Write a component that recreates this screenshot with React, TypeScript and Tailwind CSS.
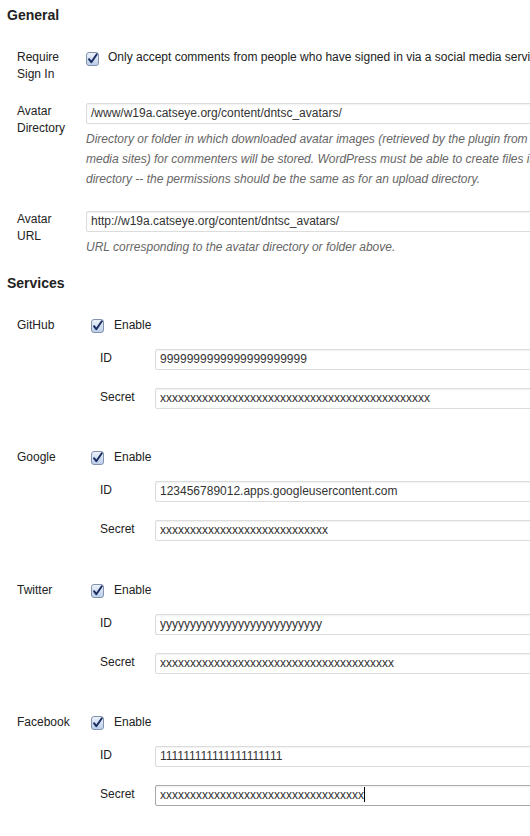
import React from "react";

function Check() {
  return (
    <svg width="13" height="14" viewBox="0 0 13 14" className="shrink-0">
      <defs>
        <linearGradient id="cbg" x1="0" y1="0" x2="0" y2="1">
          <stop offset="0" stopColor="#eef3fb" />
          <stop offset="1" stopColor="#b9cde9" />
        </linearGradient>
      </defs>
      <rect x="0.5" y="0.5" width="12" height="13" rx="2.5" fill="url(#cbg)" stroke="#8393ad" />
      <path d="M3 7.2 L5.3 10.2 L10.8 2.2" fill="none" stroke="#1c2f63" strokeWidth="2" strokeLinecap="round" strokeLinejoin="round" />
    </svg>
  );
}

function Field({ value, focused }: { value: string; focused?: boolean }) {
  return (
    <div
      className={
        "h-[21px] w-[460px] shrink-0 rounded-[2px] border bg-white pl-[4px] text-[12px] leading-[19px] text-[#333] whitespace-nowrap shadow-[inset_0_1px_2px_rgba(0,0,0,0.06)] " +
        (focused ? "border-[#a9a9a9]" : "border-[#dcdcdc]")
      }
    >
      {value}
      {focused && <span className="inline-block h-[15px] w-px bg-black align-[-3px]" />}
    </div>
  );
}

function Service({ name, id, secret, focused, top }: { name: string; id: string; secret: string; focused?: boolean; top: string }) {
  return (
    <div className={"flex pl-[10px] " + top}>
      <div className="w-[74px] shrink-0 leading-[17px]">{name}</div>
      <div className="flex shrink-0 flex-col">
        <div className="flex items-start gap-[10px] leading-[17px]">
          <div className="mt-[2px]">
            <Check />
          </div>
          <span>Enable</span>
        </div>
        <div className="mt-[15px] flex items-start pl-[9px]">
          <div className="w-[55px] shrink-0 pt-[1px] leading-[17px]">ID</div>
          <Field value={id} />
        </div>
        <div className="mt-[18px] flex items-start pl-[9px]">
          <div className="w-[55px] shrink-0 pt-[1px] leading-[17px]">Secret</div>
          <Field value={secret} focused={focused} />
        </div>
      </div>
    </div>
  );
}

export default function App() {
  return (
    <div className="h-[836px] w-[530px] overflow-hidden bg-white pl-[7px] font-['Liberation_Sans',Arial,sans-serif] text-[12px] text-[#222]">
      <h3 className="pt-[7px] text-[14px] font-bold leading-[17px]">General</h3>

      <div className="mt-[25px] flex pl-[10px]">
        <div className="w-[69px] shrink-0 leading-[17px]">
          Require
          <br />
          Sign In
        </div>
        <div className="flex shrink-0 items-start gap-[9px] leading-[17px] whitespace-nowrap">
          <div className="mt-[3px]">
            <Check />
          </div>
          <span>Only accept comments from people who have signed in via a social media service</span>
        </div>
      </div>

      <div className="mt-[20px] flex pl-[10px]">
        <div className="w-[69px] shrink-0 leading-[17px]">
          Avatar
          <br />
          Directory
        </div>
        <div className="flex shrink-0 flex-col">
          <Field value="/www/w19a.catseye.org/content/dntsc_avatars/" />
          <div className="mt-[5px] text-[12px] leading-[20px] italic text-[#666] whitespace-nowrap">
            <div>Directory or folder in which downloaded avatar images (retrieved by the plugin from social</div>
            <div>media sites) for commenters will be stored. WordPress must be able to create files in this</div>
            <div>directory -- the permissions should be the same as for an upload directory.</div>
          </div>
        </div>
      </div>

      <div className="mt-[22px] flex pl-[10px]">
        <div className="w-[69px] shrink-0 leading-[17px]">
          Avatar
          <br />
          URL
        </div>
        <div className="flex shrink-0 flex-col">
          <Field value="http://w19a.catseye.org/content/dntsc_avatars/" />
          <div className="mt-[5px] text-[12px] leading-[20px] italic text-[#666] whitespace-nowrap">
            URL corresponding to the avatar directory or folder above.
          </div>
        </div>
      </div>

      <h3 className="mt-[18px] text-[14px] font-bold leading-[17px]">Services</h3>

      <Service
        top="mt-[25px]"
        name="GitHub"
        id="9999999999999999999999"
        secret="xxxxxxxxxxxxxxxxxxxxxxxxxxxxxxxxxxxxxxxxxxxxx"
      />
      <Service
        top="mt-[40px]"
        name="Google"
        id="123456789012.apps.googleusercontent.com"
        secret="xxxxxxxxxxxxxxxxxxxxxxxxxxxx"
      />
      <Service
        top="mt-[41px]"
        name="Twitter"
        id="yyyyyyyyyyyyyyyyyyyyyyyyyyy"
        secret="xxxxxxxxxxxxxxxxxxxxxxxxxxxxxxxxxxxxxxx"
      />
      <Service
        top="mt-[40px]"
        name="Facebook"
        id="111111111111111111111"
        secret="xxxxxxxxxxxxxxxxxxxxxxxxxxxxxxxxxx"
        focused
      />
    </div>
  );
}
